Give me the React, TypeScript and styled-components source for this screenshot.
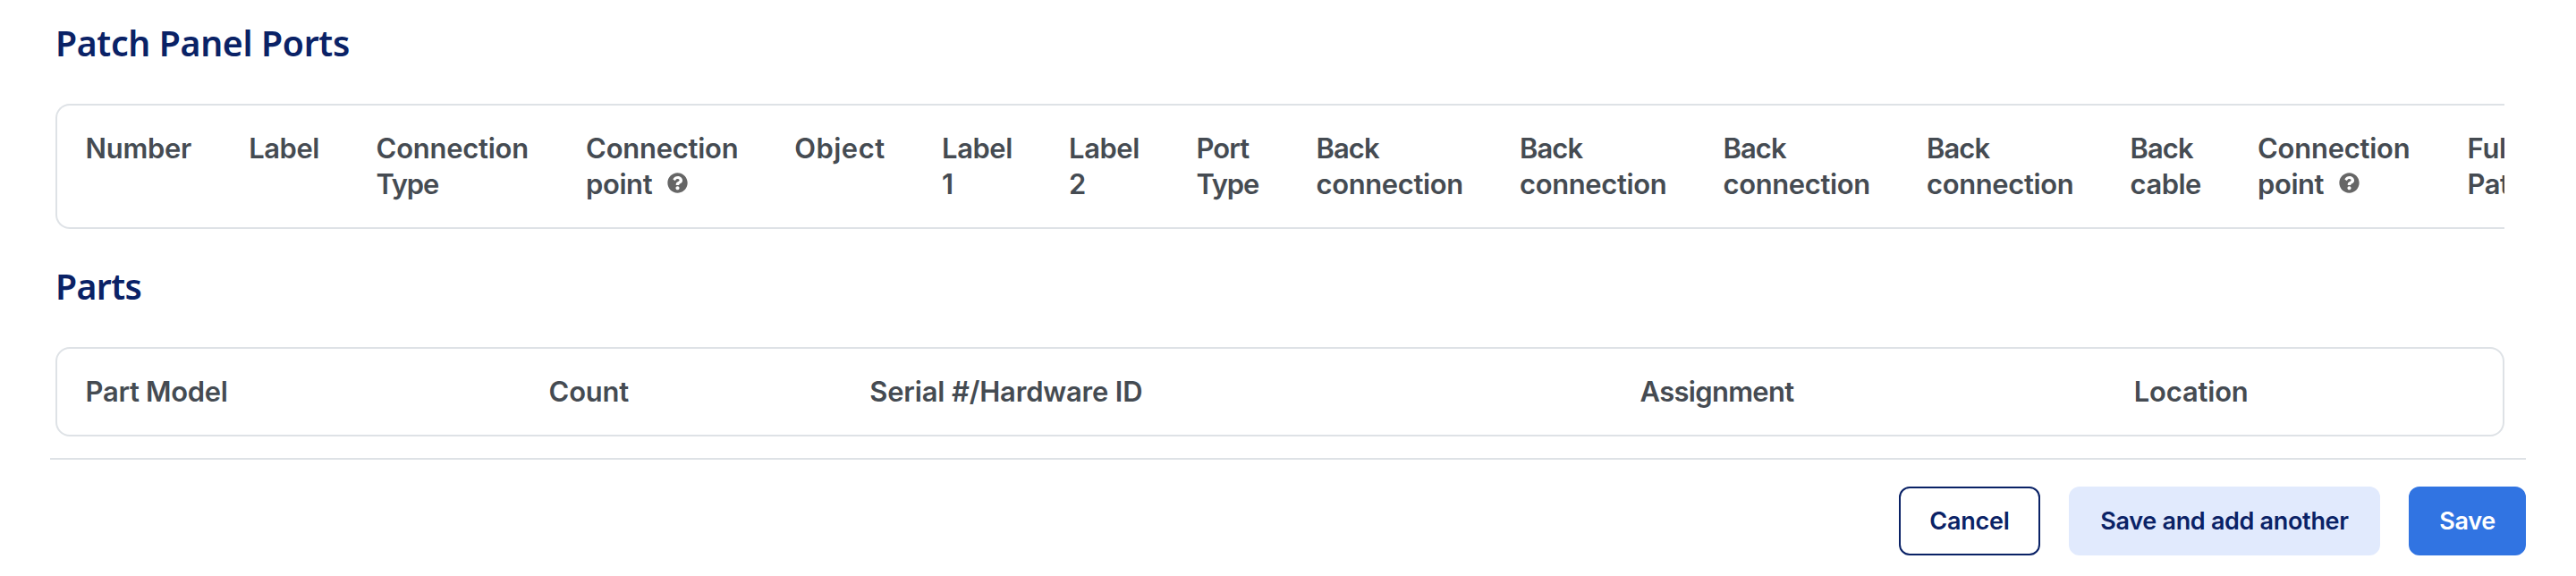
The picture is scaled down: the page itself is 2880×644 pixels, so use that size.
import React from "react";
import styled, { createGlobalStyle } from "styled-components";
import { FaQuestionCircle } from "react-icons/fa";

const GlobalStyle = createGlobalStyle`
  body {
    margin: 0;
    background: #fff;
    color: #454b52;
    font-family: Inter, "Liberation Sans", sans-serif;
  }
`;

const Page = styled.main`
  box-sizing: border-box;
  width: 2880px;
  height: 644px;
  overflow: hidden;
  padding: 24px 56px 0;
`;

const Section = styled.section`
  margin: 0 24px 0 6px;

  & + & {
    margin-top: 40px;
  }
`;

const Heading = styled.h2<{ $tracking: number }>`
  margin: 0 0 44px;
  font: 600 39.2px/48px "Noto Sans", sans-serif;
  letter-spacing: ${(p) => p.$tracking}px;
  color: #0a2266;
`;

const TableFrame = styled.div<{ $clipped?: boolean }>`
  box-sizing: border-box;
  overflow: hidden;
  border: 2px solid #dee2e6;
  border-radius: 16px;
  ${(p) =>
    p.$clipped &&
    `border-right: 0;
     border-top-right-radius: 0;
     border-bottom-right-radius: 0;`}
`;

const HeaderRow = styled.div`
  display: flex;
  padding: 28px 0;
`;

const HeaderCell = styled.div<{ $width: number }>`
  box-sizing: border-box;
  flex: 0 0 ${(p) => p.$width}px;
  padding-left: 31.6px;
`;

const Line = styled.span<{ $tracking: number }>`
  display: block;
  height: 40px;
  font-size: 30.9px;
  font-weight: 600;
  line-height: 40px;
  letter-spacing: ${(p) => p.$tracking}px;
  white-space: nowrap;
`;

const HelpIcon = styled(FaQuestionCircle)`
  width: 23px;
  height: 23px;
  margin-left: 17px;
  vertical-align: 1px;
  color: #666;
`;

const Footer = styled.footer`
  display: flex;
  justify-content: flex-end;
  gap: 32px;
  margin-top: 24px;
  padding-top: 30px;
  border-top: 2px solid #dee2e6;
`;

const variants = {
  outline: "background: #fff; color: #0a2266; border-color: #0a2266;",
  soft: "background: #e1eafd; color: #0a2266; border-color: #e1eafd;",
  primary: "background: #3174e2; color: #fff; border-color: #3174e2;",
};

const Button = styled.button<{
  $variant: keyof typeof variants;
  $width: number;
  $tracking: number;
}>`
  box-sizing: border-box;
  width: ${(p) => p.$width}px;
  height: 77px;
  padding: 0;
  border: 2px solid;
  border-radius: 12px;
  font: 600 27px/36px Inter, "Liberation Sans", sans-serif;
  letter-spacing: ${(p) => p.$tracking}px;
  white-space: nowrap;
  ${(p) => variants[p.$variant]}
`;

type Column = { width: number; lines: [string, number][]; help?: boolean };

const back: [string, number] = ["Back", -0.9];
const connection: [string, number] = ["Connection", -0.2];

const portColumns: Column[] = [
  { width: 182.6, lines: [["Number", -0.25]] },
  { width: 142.4, lines: [["Label", -0.4]] },
  { width: 234.5, lines: [connection, ["Type", -1.2]] },
  { width: 233.2, lines: [connection, ["point", -0.38]], help: true },
  { width: 164.8, lines: [["Object", 0.5]] },
  { width: 142, lines: [["Label", -0.4], ["1", 0]] },
  { width: 142.5, lines: [["Label", -0.4], ["2", 0]] },
  { width: 134, lines: [["Port", -0.9], ["Type", -1.2]] },
  { width: 227.5, lines: [back, ["connection", -0.33]] },
  { width: 227.5, lines: [back, ["connection", -0.33]] },
  { width: 227.5, lines: [back, ["connection", -0.33]] },
  { width: 227.5, lines: [back, ["connection", -0.33]] },
  { width: 142.5, lines: [back, ["cable", -0.47]] },
  { width: 234.5, lines: [connection, ["point", -0.38]], help: true },
  { width: 140, lines: [["Full", -0.3], ["Path", -0.5]] },
];

const partColumns: Column[] = [
  { width: 518, lines: [["Part Model", -0.28]] },
  { width: 358.7, lines: [["Count", -0.21]] },
  { width: 861.3, lines: [["Serial #/Hardware ID", -0.14]] },
  { width: 552.2, lines: [["Assignment", -0.65]] },
  { width: 400, lines: [["Location", -0.15]] },
];

function TableHeader({ columns }: { columns: Column[] }) {
  return (
    <HeaderRow>
      {columns.map((column, i) => (
        <HeaderCell key={i} $width={column.width}>
          {column.lines.map(([text, tracking], n) => (
            <Line key={n} $tracking={tracking}>
              {text}
              {column.help && n === column.lines.length - 1 && <HelpIcon />}
            </Line>
          ))}
        </HeaderCell>
      ))}
    </HeaderRow>
  );
}

export default function App() {
  return (
    <>
      <GlobalStyle />
      <Page>
        <Section>
          <Heading $tracking={-0.33}>Patch Panel Ports</Heading>
          <TableFrame $clipped>
            <TableHeader columns={portColumns} />
          </TableFrame>
        </Section>
        <Section>
          <Heading $tracking={-0.61}>Parts</Heading>
          <TableFrame>
            <TableHeader columns={partColumns} />
          </TableFrame>
        </Section>
        <Footer>
          <Button $variant="outline" $width={158} $tracking={-0.23}>Cancel</Button>
          <Button $variant="soft" $width={348} $tracking={-0.32}>Save and add another</Button>
          <Button $variant="primary" $width={131} $tracking={-0.33}>Save</Button>
        </Footer>
      </Page>
    </>
  );
}
